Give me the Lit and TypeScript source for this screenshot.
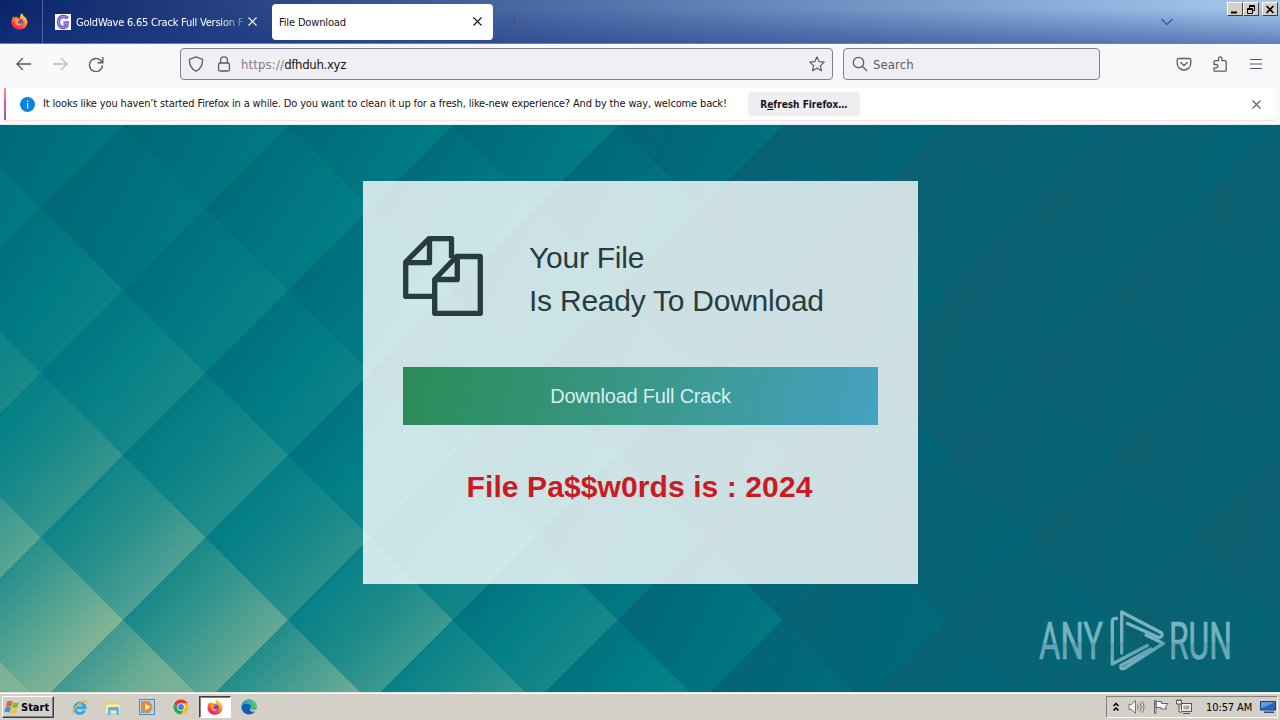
import { LitElement, html, svg, css } from 'lit';
import { customElement } from 'lit/decorators.js';

// Tile wallpaper: brightness scale, from the darkest blue to sand
const PALETTE = [
  [22, 92, 108],
  [0, 102, 119],
  [0, 126, 134],
  [30, 139, 138],
  [80, 162, 147],
  [134, 182, 149],
];

const COLS = [41, 206, 371, 536, 700, 865, 1030, 1195];
const ROWS = [125, 208, 373, 538, 620, 703];
const LEVELS = [
  [0.6, 0.7, 0.9, 1.0, 0.8, 0.1, -0.2, -0.1],
  [0.8, 0.8, 1.1, 1.0, 0.7, 0, -0.2, -0.2],
  [1.9, 1.8, 1.4, 1.1, 0.6, -0.1, -0.3, -0.2],
  [3.2, 3.0, 2.3, 1.7, 0.9, 0.1, -0.1, -0.2],
  [4.1, 3.8, 3.0, 2.3, 1.2, 0.3, 0, -0.1],
  [4.8, 4.6, 3.8, 2.7, 1.5, 0.4, 0, -0.1],
];
const STEP = 82.4;

const find = (list: number[], v: number) => {
  let i = 0;
  while (i < list.length - 2 && v > list[i + 1]) i++;
  const f = Math.min(1.6, Math.max(-0.6, (v - list[i]) / (list[i + 1] - list[i])));
  return [i, f];
};

const level = (x: number, y: number) => {
  const [c, fx] = find(COLS, x);
  const [r, fy] = find(ROWS, y);
  const top = LEVELS[r][c] * (1 - fx) + LEVELS[r][c + 1] * fx;
  const bottom = LEVELS[r + 1][c] * (1 - fx) + LEVELS[r + 1][c + 1] * fx;
  return top * (1 - fy) + bottom * fy;
};

const shade = (v: number) => {
  const t = Math.min(4.99, Math.max(0, v + 1));
  const i = Math.floor(t);
  const mix = PALETTE[i].map((a, k) => Math.round(a + (PALETTE[i + 1][k] - a) * (t - i)));
  return `rgb(${mix.join(',')})`;
};

interface Tile {
  x: number;
  y: number;
  dx: number;
  dy: number;
  from: string;
  mid: string;
  to: string;
}

const tiles: Tile[] = [];
for (let j = -1; j <= 7; j++) {
  for (let i = 0; i <= 16; i++) {
    if ((i + j) % 2 !== 0) continue;
    const x = 41 + STEP * i;
    const y = 208 + STEP * j;
    const right = level(x, y);
    const glow = Math.min(1, Math.max(0, right / 2));
    const left = right - 0.45 - glow * 0.25 - Math.max(0, right) * 0.28;
    // the brighter the tile, the more its light leans to the bottom edge
    const slope = 0.3 + glow * 0.65;
    const dx = 1 / (1 + slope * slope);
    tiles.push({
      x,
      y: y - 125,
      dx: dx / 2,
      dy: (dx * slope) / 2,
      from: shade(left),
      mid: shade((left + right) / 2),
      to: shade(right),
    });
  }
}

const firefoxIcon = (size: number, id: string) => html`
  <svg width=${size} height=${size} viewBox="0 0 16 16">
    <defs>
      <linearGradient id=${id} x1="0.8" y1="0" x2="0.3" y2="1">
        <stop offset="0" stop-color="#fff04a" />
        <stop offset="0.4" stop-color="#ff9a2b" />
        <stop offset="0.75" stop-color="#ff4240" />
        <stop offset="1" stop-color="#e31587" />
      </linearGradient>
    </defs>
    <path fill="url(#${id})" d="M10 0.3c1 .9 1.5 1.7 1.8 2.5 2.300 1.300 3.700 3.400 3.700 6 0 4-3.200 7-7.400 7S.5 12.700.5 8.700c0-2.200.7-4 2-5.600l.5 1.500L5 3.200l.9 1.400c1-.2 2-.1 2.700.2C8.400 3.200 8.900 1.500 10 .3z" />
    <circle cx="8.300" cy="8.800" r="3.400" fill="#7a45d8" />
    <path fill="#ffa32c" d="M3.800 6.200c1.700-.9 3.500-.5 4.700.8-1 .2-1.900.6-2.100 1.400-.2.900.5 1.700 1.500 1.700 1 .1 1.700-.5 2.600-.3-.5 1.500-1.900 2.300-3.500 2.100C4.800 11.600 3.400 9 3.800 6.200z" />
  </svg>
`;

const closeIcon = (size = 9) => html`
  <svg width=${size} height=${size} viewBox="0 0 9 9" fill="none" stroke="currentColor" stroke-width="1.1">
    <path d="M.5.5l8 8M8.500.5l-8 8" />
  </svg>
`;

@customElement('wall-paper')
export class WallPaper extends LitElement {
  static styles = css`
    :host {
      display: block;
      width: 1280px;
      height: 567px;
    }

    svg {
      display: block;
    }
  `;

  render() {
    return html`
      <svg width="1280" height="567" viewBox="0 0 1280 567">
        <rect width="1280" height="567" fill="#006677" />
        ${tiles.map(
          (t, n) => svg`
            <linearGradient id="t${n}" x1=${0.5 - t.dx} y1=${0.5 - t.dy} x2=${0.5 + t.dx} y2=${0.5 + t.dy}>
              <stop offset="0" stop-color=${t.from} />
              <stop offset="0.5" stop-color=${t.mid} />
              <stop offset="1" stop-color=${t.to} />
            </linearGradient>
            <path fill="url(#t${n})" d="M${t.x} ${t.y}l-82.400 82.400l-82.400-82.400l82.400-82.400z" />
          `
        )}
      </svg>
    `;
  }
}

@customElement('browser-chrome')
export class BrowserChrome extends LitElement {
  static styles = css`
    :host {
      display: block;
      font-family: 'DejaVu Sans Condensed', 'DejaVu Sans', sans-serif;
      font-stretch: condensed;
      font-size: 11px;
      color: #15141a;
    }

    svg {
      display: block;
      flex: none;
    }

    .tabs {
      position: relative;
      display: flex;
      align-items: center;
      height: 43px;
      border-bottom: 1px solid #6f7fa6;
      background: linear-gradient(to bottom, rgba(30, 60, 140, 0) 20%, rgba(24, 56, 136, 0.5) 100%),
        linear-gradient(to right, #0a246a, #a6caf0);
    }

    .view {
      display: flex;
      align-items: center;
      justify-content: center;
      box-sizing: border-box;
      width: 43px;
      height: 43px;
      padding-right: 3px;
      border-right: 1px solid #51659c;
    }

    .tab {
      display: flex;
      align-items: center;
      box-sizing: border-box;
      height: 36px;
      white-space: nowrap;
    }

    .tab.idle {
      width: 229px;
      padding: 0 15px 0 12px;
      color: #fff;
    }

    .tab.active {
      width: 221px;
      padding: 0 11px 0 7px;
      border-radius: 4px;
      background: #fff;
    }

    .favicon {
      margin-right: 5px;
    }

    .title {
      flex: 1;
      margin-top: 2px;
      overflow: hidden;
    }

    .idle .title {
      letter-spacing: -0.22px;
      mask-image: linear-gradient(to right, #000 84%, transparent 102%);
    }

    .active .title {
      letter-spacing: -0.15px;
    }

    .plus {
      margin-left: 16px;
      color: #46546f;
    }

    .chevron {
      margin-left: auto;
      margin-right: 107px;
      color: #3d5f95;
    }

    .window-buttons {
      position: absolute;
      top: 2px;
      right: 2px;
      display: flex;
    }

    .window-buttons span {
      display: flex;
      align-items: center;
      justify-content: center;
      box-sizing: border-box;
      width: 16px;
      height: 14px;
      border: 1px solid;
      border-color: #fff #404040 #404040 #fff;
      background: #d4d0c8;
      color: #000;
    }

    .window-buttons span:last-child {
      margin-left: 3px;
    }

    .nav {
      display: flex;
      align-items: center;
      height: 44px;
      padding: 0 16px;
      box-sizing: border-box;
      padding-bottom: 4px;
      background: #f9f9fb;
      color: #5b5b66;
    }

    .nav .move {
      display: flex;
      gap: 20px;
      width: 164px;
    }

    .disabled {
      opacity: 0.4;
    }

    .field {
      display: flex;
      align-items: center;
      box-sizing: border-box;
      height: 32px;
      padding: 0 7px;
      border: 1px solid #7f7f88;
      border-radius: 4px;
      background: #f0f0f4;
      font-size: 13px;
    }

    .url {
      width: 653px;
      gap: 12px;
    }

    .url .address {
      flex: 1;
      margin-left: -3px;
      color: #7e7e87;
      letter-spacing: 0.15px;
    }

    .url b {
      font-weight: normal;
      color: #15141a;
      letter-spacing: -0.3px;
    }

    .search {
      width: 257px;
      margin-left: 10px;
      padding-left: 8px;
      gap: 5px;
      letter-spacing: 0.1px;
    }

    .tools {
      display: flex;
      gap: 20px;
      margin-left: auto;
    }

    .notice {
      display: flex;
      height: 37px;
      padding: 0 4px;
      box-sizing: border-box;
      background: #f9f9fb;
      border-bottom: 1px solid #d7eef2;
    }

    .bar {
      display: flex;
      align-items: center;
      box-sizing: border-box;
      width: 1272px;
      height: 33px;
      padding-right: 15px;
      border-bottom: 1px solid #f7e3e6;
      border-radius: 0 4px 4px 0;
      background: #fff;
    }

    .stripe {
      align-self: stretch;
      width: 2px;
      margin-right: 14px;
      background: linear-gradient(to bottom, #f79a6e, #e0559c 50%, #9059cf);
    }

    .message {
      margin-left: 8px;
      margin-bottom: 1px;
      white-space: nowrap;
      letter-spacing: -0.15px;
    }

    .refresh {
      display: flex;
      align-items: center;
      justify-content: center;
      width: 112px;
      height: 24px;
      margin-left: 21px;
      border-radius: 4px;
      background: #efeff1;
      font-size: 10px;
      font-weight: bold;
      white-space: nowrap;
    }

    .bar .close {
      margin-left: auto;
      color: #5b5b66;
    }
  `;

  render() {
    return html`
      <div class="tabs">
        <div class="view">${firefoxIcon(17, 'fx-tab')}</div>
        <div class="tab idle">
          <svg class="favicon" width="16" height="16" viewBox="0 0 16 16">
            <rect width="16" height="16" fill="#fff" />
            <path fill="none" stroke="#6b4fd0" stroke-width="3.400" d="M12.500 4.500C11.500 3 10 2.500 8.200 2.500 5 2.500 3.500 5 3.500 8s1.500 5.500 4.700 5.500c2.300 0 4-1 4-4.500H8.500" />
            <path fill="none" stroke="#cfc4f7" stroke-width="0.8" d="M12.500 4.500C11.500 3 10 2.500 8.200 2.500 5 2.500 3.500 5 3.500 8s1.500 5.500 4.700 5.500c2.300 0 4-1 4-4.500H8.500" />
          </svg>
          <div class="title">GoldWave 6.65 Crack Full Version F</div>
          <span class="close">${closeIcon()}</span>
        </div>
        <div class="tab active">
          <div class="title">File Download</div>
          <span class="close">${closeIcon()}</span>
        </div>
        <svg class="plus" width="11" height="11" viewBox="0 0 11 11" fill="none" stroke="currentColor">
          <path d="M5.500 1v9M1 5.500h9" />
        </svg>
        <svg class="chevron" width="12" height="8" viewBox="0 0 12 8" fill="none" stroke="currentColor" stroke-width="1.500">
          <path d="M.5 1L6 6.500 11.500 1" />
        </svg>
        <div class="window-buttons">
          <span>
            <svg width="10" height="9" viewBox="0 0 10 9"><path d="M1 6.500h6v2H1z" /></svg>
          </span>
          <span>
            <svg width="10" height="9" viewBox="0 0 10 9" fill="none" stroke="#000">
              <path d="M3.500 3V.5h5v5H7M3 1.500h6M1.500 3.500h5v5h-5zM1 4.500h6" />
            </svg>
          </span>
          <span>
            <svg width="10" height="9" viewBox="0 0 10 9" stroke="#000" stroke-width="1.600"><path d="M1.500 1l7 7M8.500 1l-7 7" /></svg>
          </span>
        </div>
      </div>

      <div class="nav">
        <div class="move">
          <svg width="16" height="16" viewBox="0 0 16 16" fill="none" stroke="currentColor" stroke-width="1.300">
            <path d="M15 8H1.500M7 2L1 8l6 6" />
          </svg>
          <svg class="disabled" width="16" height="16" viewBox="0 0 16 16" fill="none" stroke="currentColor" stroke-width="1.300">
            <path d="M1 8h13.500M9 2l6 6-6 6" />
          </svg>
          <svg width="16" height="16" viewBox="0 0 16 16" fill="none" stroke="currentColor" stroke-width="1.400">
            <path d="M14 6.500A6.500 6.500 0 1 0 14.500 9.500M14.800 1v5.800H9.500" />
          </svg>
        </div>
        <div class="field url">
          <svg width="16" height="16" viewBox="0 0 16 16" fill="none" stroke="currentColor" stroke-width="1.300" stroke-linejoin="round">
            <path d="M8 .8l6.600 2.600c0 5-1.400 9.400-6.600 11.800C2.800 12.800 1.400 8.400 1.400 3.400z" />
          </svg>
          <svg width="16" height="16" viewBox="0 0 16 16" fill="none" stroke="currentColor" stroke-width="1.300">
            <rect x="2.600" y="7" width="10.800" height="8" rx="1.500" />
            <path d="M4.600 7V4.200a3.400 3.400 0 0 1 6.800 0V7" />
          </svg>
          <div class="address">https://<b>dfhduh.xyz</b></div>
          <svg width="16" height="16" viewBox="0 0 16 16" fill="none" stroke="currentColor" stroke-width="1.200" stroke-linejoin="round">
            <path d="M8 .9l2.100 4.700 5.100.5-3.800 3.500 1.100 5.200L8 12.200l-4.500 2.600 1.100-5.200L.8 6.100l5.100-.5z" />
          </svg>
        </div>
        <div class="field search">
          <svg width="16" height="16" viewBox="0 0 16 16" fill="none" stroke="currentColor" stroke-width="1.300">
            <circle cx="6.500" cy="6.500" r="5.200" />
            <path d="M10.300 10.300l4.700 4.700" />
          </svg>
          <span>Search</span>
        </div>
        <div class="tools">
          <svg width="16" height="16" viewBox="0 0 16 16" fill="none" stroke="currentColor" stroke-width="1.300" stroke-linecap="round" stroke-linejoin="round">
            <path d="M2.500 2.500h11a1.300 1.300 0 0 1 1.300 1.300v3.400a6.800 6.800 0 0 1-13.600 0V3.800a1.300 1.300 0 0 1 1.300-1.300z" />
            <path d="M4.800 6.500L8 9.500l3.200-3" />
          </svg>
          <svg width="16" height="16" viewBox="0 0 16 16" fill="none" stroke="currentColor" stroke-width="1.300" stroke-linejoin="round">
            <path d="M2 8.500V5.700a1 1 0 0 1 1-1h3.600V2.500a1.700 1.700 0 0 1 3.400 0v2.200h3.200a1 1 0 0 1 1 1v8.500a1 1 0 0 1-1 1H3a1 1 0 0 1-1-1v-2.300h2.200a1.700 1.700 0 0 0 0-3.400z" />
          </svg>
          <svg width="16" height="16" viewBox="0 0 16 16" fill="none" stroke="currentColor" stroke-width="1.200">
            <path d="M2 3.500h12M2 8h12M2 12.500h12" />
          </svg>
        </div>
      </div>

      <div class="notice">
        <div class="bar">
          <div class="stripe"></div>
          <svg width="15" height="15" viewBox="0 0 15 15">
            <circle cx="7.500" cy="7.500" r="7.500" fill="#0a84e0" />
            <path d="M7 3.500h1.200v1.400H7zM7 6.200h1.200v5.300H7z" fill="#fff" />
          </svg>
          <div class="message">It looks like you haven’t started Firefox in a while. Do you want to clean it up for a fresh, like-new experience? And by the way, welcome back!</div>
          <div class="refresh"><span>R<u>e</u>fresh Firefox…</span></div>
          <span class="close">${closeIcon()}</span>
        </div>
      </div>
    `;
  }
}

@customElement('download-page')
export class DownloadPage extends LitElement {
  static styles = css`
    :host {
      position: relative;
      display: block;
      height: 567px;
      overflow: hidden;
      font-family: 'Liberation Sans', Arial, sans-serif;
    }

    .backdrop {
      position: absolute;
      inset: 0;
    }

    .card {
      position: relative;
      box-sizing: border-box;
      width: 555px;
      height: 403px;
      margin: 56px 0 0 363px;
      padding: 55px 40px;
      background: rgba(255, 255, 255, 0.8);
    }

    .intro {
      display: flex;
      gap: 46px;
      color: #273c40;
    }

    .heading {
      font-size: 30px;
      line-height: 43px;
      letter-spacing: -0.24px;
      white-space: nowrap;
    }

    .button {
      display: flex;
      align-items: center;
      justify-content: center;
      height: 58px;
      margin-top: 45px;
      background: linear-gradient(100deg, #2a8b57, #3b998e 55%, #45a1c2);
      color: #d5efee;
      font-size: 20px;
      letter-spacing: -0.2px;
    }

    .password {
      margin-top: 40px;
      padding-right: 2px;
      color: #cb1a20;
      font-size: 30px;
      font-weight: bold;
      line-height: 43px;
      letter-spacing: 0.1px;
      text-align: center;
      white-space: nowrap;
    }

    .watermark {
      position: absolute;
      right: 42px;
      bottom: 18px;
      overflow: visible;
    }
  `;

  render() {
    return html`
      <wall-paper class="backdrop"></wall-paper>
      <div class="card">
        <div class="intro">
          <svg width="80" height="80" viewBox="0 0 80 80" fill="none" stroke="currentColor" stroke-width="5.300" stroke-linejoin="round">
            <path d="M31.300 60.300H2.700V26L26 2.700H48.500V22M2.700 26.700H26.500V2.700" />
            <path d="M31.700 43.500V77.300H77.300V20.500H53.500L31.700 43.500H54.300V20.500" />
          </svg>
          <div class="heading">Your File<br />Is Ready To Download</div>
        </div>
        <div class="button">Download Full Crack</div>
        <div class="password">File Pa$$w0rds is : 2024</div>
      </div>
      <svg class="watermark" width="200" height="66" viewBox="0 0 200 66">
        <defs>
          <linearGradient id="wm" gradientUnits="userSpaceOnUse" x1="0" y1="2" x2="0" y2="64">
            <stop offset="0" stop-color="#79b6c1" />
            <stop offset="0.52" stop-color="#74b2be" />
            <stop offset="0.53" stop-color="#5f9fb0" />
            <stop offset="1" stop-color="#7ab3bf" />
          </linearGradient>
        </defs>
        <g fill="url(#wm)" stroke="url(#wm)" stroke-width="0.7" font-family="Roboto, sans-serif" font-size="51">
          <text x="1" y="51" textLength="64" lengthAdjust="spacingAndGlyphs">ANY</text>
          <text x="131" y="51" textLength="63" lengthAdjust="spacingAndGlyphs">RUN</text>
        </g>
        <g fill="none" stroke="url(#wm)" stroke-width="3.300" stroke-linejoin="round" stroke-linecap="round">
          <path d="M78.500 10.500q-4.200-.5-4.200 3v42.500l35-18.500" />
          <path d="M83.700 45V4l40 21q1.500 4-3 4.500L89.500 15.500" />
          <path d="M89.500 15.500M108 27l17.300 8.500L86 60.500q-4 1-3-3L113 41" />
        </g>
      </svg>
    `;
  }
}

@customElement('task-bar')
export class TaskBar extends LitElement {
  static styles = css`
    :host {
      display: flex;
      align-items: center;
      box-sizing: border-box;
      height: 28px;
      padding: 1px 2px 0 2px;
      border-top: 1px solid #e3e1dc;
      box-shadow: inset 0 1px 0 #fff;
      background: #d4d0c8;
      font-family: 'DejaVu Sans Condensed', 'DejaVu Sans', sans-serif;
      font-stretch: condensed;
      font-size: 11px;
      color: #000;
    }

    svg {
      display: block;
      flex: none;
    }

    .start {
      display: flex;
      align-items: center;
      box-sizing: border-box;
      width: 52px;
      height: 22px;
      padding-left: 1px;
      border: 1px solid;
      border-color: #fff #404040 #404040 #fff;
      box-shadow: inset -1px -1px 0 #808080;
      font-weight: bold;
    }

    .apps {
      display: flex;
      margin-left: 9px;
    }

    .app {
      display: flex;
      align-items: center;
      justify-content: center;
      box-sizing: border-box;
      width: 32px;
      height: 22px;
      margin-right: 2px;
    }

    .app.current {
      border: 1px solid;
      border-color: #404040 #fff #fff #404040;
      box-shadow: inset 1px 1px 0 #808080;
      background: #fff;
    }

    .tray {
      display: flex;
      align-items: center;
      box-sizing: border-box;
      width: 172px;
      height: 22px;
      margin-left: auto;
      padding-left: 5px;
      border: 1px solid;
      border-color: #808080 #fff #fff #808080;
    }

    .clock {
      width: 48px;
      margin: 0 6px 0 13px;
      white-space: nowrap;
      letter-spacing: -0.1px;
    }

    .tray .sound {
      margin-left: 8px;
    }

    .tray .flag {
      margin-left: 8px;
    }

    .tray .network {
      margin-left: 7px;
    }
  `;

  render() {
    return html`
      <div class="start">
        <svg width="17" height="17" viewBox="0 0 16 16">
          <path fill="#e8622c" d="M3 2.500c2-1.300 3.500-1 5 0L6.700 7.300c-1.500-1-3-1.200-5 0z" />
          <path fill="#7fba3c" d="M8.700 3c1.700 1 3.500 1 5.500-.2l-1.400 4.800c-1.800 1.200-3.600 1.200-5.400.1z" />
          <path fill="#3f8fdc" d="M1.500 8c2-1.200 3.500-1 5 0l-1.300 4.800c-1.500-1-3-1.200-5 0z" />
          <path fill="#f8c32c" d="M7.200 8.500c1.700 1 3.500 1 5.500-.2l-1.400 4.800c-1.800 1.200-3.600 1.200-5.400.1z" />
        </svg>
        <span>Start</span>
      </div>
      <div class="apps">
        <div class="app">
          <svg width="17" height="17" viewBox="0 0 17 17" fill="none">
            <path stroke="#3aa4e4" stroke-width="3" d="M13.500 11.500A5.200 5.200 0 1 1 14 8.800H5" />
            <path stroke="#e9b93a" stroke-width="1.300" d="M2.500 15.500C.3 14.500 3 9 7.500 5.200 12 1.500 16.500 0 15.500 4" />
          </svg>
        </div>
        <div class="app">
          <svg width="17" height="17" viewBox="0 0 17 17">
            <path fill="#e9cf72" d="M1 2h6l1 1.500h7V14H1z" />
            <path fill="#f8ebac" d="M1 5.500h14V14H1z" />
            <path fill="#62b5dc" d="M3 16V9.500q0-1.500 1.500-1.500h8Q14 8 14 9.500V16h-2.500v-4.500h-6V16z" />
          </svg>
        </div>
        <div class="app">
          <svg width="16" height="16" viewBox="0 0 16 16">
            <rect x="0.500" y="0.500" width="15" height="15" fill="#b5d5ea" stroke="#4d8dbd" />
            <rect x="2" y="2" width="9" height="12" fill="#6ea8d0" />
            <circle cx="8" cy="8" r="5.500" fill="#f58a1c" />
            <path fill="#fff" d="M6.300 4.800v6.400l5-3.200z" />
          </svg>
        </div>
        <div class="app">
          <svg width="16" height="16" viewBox="0 0 16 16">
            <circle cx="8" cy="8" r="7.500" fill="#fbc116" />
            <path fill="#e33b2e" d="M1.500 4.250A7.500 7.500 0 0 1 14.500 4.250H8L4.800 9.900z" />
            <path fill="#2da94f" d="M1.500 4.250A7.500 7.500 0 0 0 7.500 15.500L11.200 9.900H4.800z" />
            <circle cx="8" cy="8" r="3.700" fill="#fff" />
            <circle cx="8" cy="8" r="2.900" fill="#3b7ded" />
          </svg>
        </div>
        <div class="app current">${firefoxIcon(16, 'fx-task')}</div>
        <div class="app">
          <svg width="16" height="16" viewBox="0 0 16 16">
            <defs>
              <linearGradient id="edge" x1="0" y1="0.500" x2="1" y2="0.300">
                <stop offset="0" stop-color="#1b8fd8" />
                <stop offset="1" stop-color="#56d364" />
              </linearGradient>
            </defs>
            <circle cx="8" cy="8" r="7.600" fill="#0f5fb5" />
            <path fill="url(#edge)" d="M.5 7.500C1 3.300 4 .4 8 .4s7.600 2.800 7.600 6.300c0 2.500-1.800 4-4 4-1.700 0-2.600-.7-2.600-1.300 0-.5.800-.8.800-2C9.800 5.800 8 4.700 6 4.700 3.400 4.700 1.200 6 .5 7.500z" />
            <path fill="#d4d0c8" d="M9 9.500c.5 1.300 3.500 1.800 6 .5l.8 2-4 .8C9.500 12.500 8.500 11 9 9.500z" />
          </svg>
        </div>
      </div>
      <div class="tray">
        <svg width="8" height="10" viewBox="0 0 8 10" fill="none" stroke="#000" stroke-width="1.500">
          <path d="M1.500 4L4 1.500 6.500 4M1.500 8.500L4 6l2.500 2.500" />
        </svg>
        <svg class="sound" width="17" height="16" viewBox="0 0 17 16" fill="none" stroke="#77757a">
          <path fill="#f4f3f1" d="M1 5.500h2.500l4-4v13l-4-4H1z" />
          <path d="M9.500 5.500q1.500 2.500 0 5M11.800 3.500q3 4.500 0 9M14 2q4 6 0 12" />
        </svg>
        <svg class="flag" width="16" height="16" viewBox="0 0 16 16" stroke="#66646a" fill="#f8f8f8">
          <path d="M1.500 1.500h1.500v13H1.500zM3 2.500h5.500v2H15l-2.500 3 1 2.500H8V8.500H3z" />
        </svg>
        <svg class="network" width="17" height="16" viewBox="0 0 17 16" stroke="#55535a" fill="#f1f1f1">
          <rect x="5.500" y="4.500" width="10" height="8" />
          <rect x="7.500" y="6.500" width="6" height="4" fill="#aaa9ad" stroke="none" />
          <path d="M7 14.500h7M.5 1.500h5v3.500h-5zM1.500 0v2M4.500 0v2M3 5v8h3" />
        </svg>
        <div class="clock">10:57 AM</div>
        <svg width="16" height="14" viewBox="0 0 16 14">
          <path fill="#2a64b8" stroke="#1b3f7d" d="M.5 1.500h15v8.500H.5z" />
          <path fill="#5e9be0" d="M1 2h14L1 8.500z" />
          <path fill="#3d4d66" d="M4 11.500h10v1.500H4z" />
        </svg>
      </div>
    `;
  }
}

@customElement('app-root')
export class AppRoot extends LitElement {
  static styles = css`
    :host {
      display: flex;
      flex-direction: column;
      width: 1280px;
      height: 720px;
      overflow: hidden;
    }
  `;

  render() {
    return html`
      <browser-chrome></browser-chrome>
      <download-page></download-page>
      <task-bar></task-bar>
    `;
  }
}
